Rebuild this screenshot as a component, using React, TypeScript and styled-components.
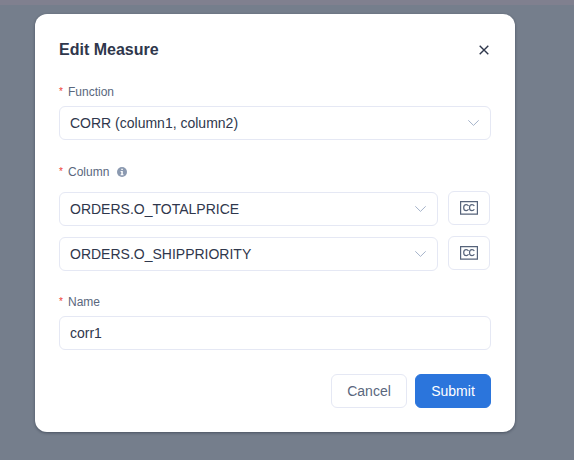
import React from "react";
import styled, { createGlobalStyle } from "styled-components";

const GlobalStyle = createGlobalStyle`
  * { box-sizing: border-box; }
  body {
    margin: 0;
    background: #757e8c;
    font-family: "Liberation Sans", Arial, sans-serif;
    color: #2f374c;
  }
`;

const Backdrop = styled.div`
  height: 460px;
  overflow: hidden;
  border-top: 5px solid #80808f;
  padding: 9px 59px 0 35px;
  background: #757e8c;
`;

const Dialog = styled.section`
  width: 480px;
  height: 418px;
  padding: 24px;
  border-radius: 12px;
  background: #fff;
  box-shadow: 0 1px 3px rgba(20, 28, 44, 0.45);
  display: flex;
  flex-direction: column;
`;

const Header = styled.header`
  display: flex;
  align-items: center;
  justify-content: space-between;
  height: 24px;
`;

const Title = styled.h1`
  margin: 0;
  font-size: 16px;
  line-height: 24px;
  font-weight: 700;
`;

const CloseButton = styled.button`
  display: flex;
  width: 14px;
  height: 24px;
  padding: 0;
  border: 0;
  background: none;
  align-items: center;
  justify-content: center;
`;

const Field = styled.div<{ $top: number }>`
  margin-top: ${(p) => p.$top}px;
`;

const Label = styled.div<{ $gap: number }>`
  display: flex;
  align-items: center;
  height: 16px;
  margin-bottom: ${(p) => p.$gap}px;
  font-size: 12px;
  line-height: 16px;
  color: #5a677d;

  svg { margin-left: 8px; }
`;

const Required = styled.span`
  width: 9px;
  font-size: 10px;
  line-height: 14px;
  color: #ee3d36;
`;

const Control = styled.div`
  display: flex;
  flex: 1;
  align-items: center;
  justify-content: space-between;
  height: 34px;
  padding: 0 10px;
  border: 1px solid #e5e8f4;
  border-radius: 6px;
  font-size: 14px;
  line-height: 20px;
`;

const TextInput = styled.input`
  display: block;
  width: 100%;
  height: 34px;
  padding: 0 10px;
  border: 1px solid #e5e8f4;
  border-radius: 6px;
  outline: 0;
  font: 14px/20px "Liberation Sans", Arial, sans-serif;
  color: #2f374c;
`;

const ColumnRows = styled.div`
  display: grid;
  gap: 10px;
`;

const ColumnRow = styled.div`
  display: flex;
  align-items: flex-end;
  gap: 10px;
  height: 35px;
  padding-right: 1px;
`;

const CcButton = styled.button`
  display: flex;
  align-self: flex-start;
  align-items: center;
  justify-content: center;
  width: 42px;
  height: 34px;
  padding: 0;
  border: 1px solid #e5e8f4;
  border-radius: 6px;
  background: #fff;
`;

const Footer = styled.footer`
  display: flex;
  justify-content: flex-end;
  gap: 8px;
  margin-top: 24px;
`;

const Button = styled.button<{ $primary?: boolean }>`
  width: 76px;
  height: 34px;
  padding: 0;
  border: 1px solid ${(p) => (p.$primary ? "#2b75dc" : "#e5e8f4")};
  border-radius: 6px;
  background: ${(p) => (p.$primary ? "#2b75dc" : "#fff")};
  color: ${(p) => (p.$primary ? "#fff" : "#5a677d")};
  font: 14px/20px "Liberation Sans", Arial, sans-serif;
`;

const Chevron = () => (
  <svg width="12" height="8" viewBox="0 0 12 8" fill="none" stroke="#a5b3ca">
    <path d="M.3 1.300 5.500 6.400l5.200-5.100" />
  </svg>
);

const CloseIcon = () => (
  <svg width="10" height="10" viewBox="0 0 10 10" fill="none" stroke="#2f374c" strokeWidth="1.4">
    <path d="m.7.7 8.600 8.600M9.300.7.7 9.300" />
  </svg>
);

const InfoIcon = () => (
  <svg width="10" height="10" viewBox="0 0 10 10">
    <circle cx="5" cy="5" r="5" fill="#8b99b0" />
    <path d="M4.300 1.700h1.500v1.400H4.300zM3.600 3.900h2.200v3.300h.7v1H3.600v-1h.7V4.900h-.7z" fill="#fff" />
  </svg>
);

const CcIcon = () => (
  <svg width="18" height="14" viewBox="0 0 18 14" fill="none" stroke="#56637a">
    <path d="M.6.6h16.800v12.500H.6z" strokeWidth="1.200" />
    <path
      d="M8.500 5.100C8 4.100 7.200 3.700 6.200 3.700 4.700 3.700 3.700 4.900 3.700 6.700s1 3 2.500 3c1 0 1.800-.4 2.300-1.400M14.300 5.100c-.5-1-1.300-1.400-2.300-1.400-1.500 0-2.500 1.200-2.500 3s1 3 2.500 3c1 0 1.800-.4 2.300-1.400"
      strokeWidth="1.200"
    />
  </svg>
);

const columns = ["ORDERS.O_TOTALPRICE", "ORDERS.O_SHIPPRIORITY"];

export default function App() {
  return (
    <>
      <GlobalStyle />
      <Backdrop>
        <Dialog role="dialog" aria-label="Edit Measure">
          <Header>
            <Title>Edit Measure</Title>
            <CloseButton aria-label="Close"><CloseIcon /></CloseButton>
          </Header>
          <Field $top={22}>
            <Label $gap={6}><Required>*</Required>Function</Label>
            <Control>CORR (column1, column2)<Chevron /></Control>
          </Field>
          <Field $top={24}>
            <Label $gap={11}><Required>*</Required>Column<InfoIcon /></Label>
            <ColumnRows>
              {columns.map((name) => (
                <ColumnRow key={name}>
                  <Control>{name}<Chevron /></Control>
                  <CcButton aria-label="Computed column"><CcIcon /></CcButton>
                </ColumnRow>
              ))}
            </ColumnRows>
          </Field>
          <Field $top={23}>
            <Label $gap={6}><Required>*</Required>Name</Label>
            <TextInput defaultValue="corr1" aria-label="Name" />
          </Field>
          <Footer>
            <Button>Cancel</Button>
            <Button $primary>Submit</Button>
          </Footer>
        </Dialog>
      </Backdrop>
    </>
  );
}
